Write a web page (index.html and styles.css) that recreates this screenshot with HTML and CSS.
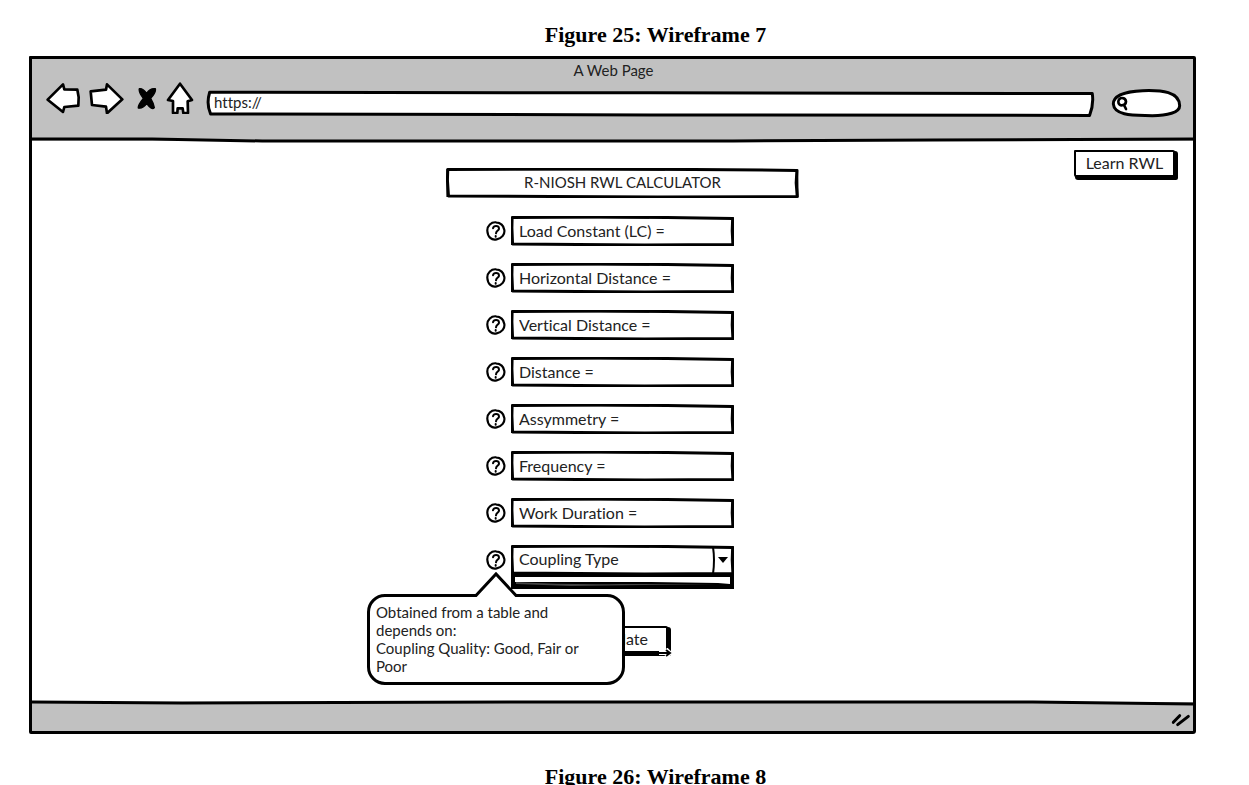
FILE: index.html
```html
<!DOCTYPE html>
<html lang="en">
<head>
<meta charset="utf-8">
<meta name="viewport" content="width=device-width, initial-scale=1">
<title>R-NIOSH RWL Calculator</title>
<link rel="stylesheet" href="styles.css">
</head>
<body>
<svg class="defs" width="0" height="0" aria-hidden="true">
  <symbol id="frame" viewBox="0 0 100 100" preserveAspectRatio="none">
    <path class="ink" d="M0.500 5 L40 3 L70 5 L99.400 8 L99.200 50 L99.500 95 L60 97 L30 95 L0.700 93 L0.400 40Z"/>
    <path class="ink ink-thin" d="M15 3 L62 5 M99.500 4 L99.600 98 M0.400 3 L0.400 97 M40 98 L82 97"/>
  </symbol>
  <symbol id="help" viewBox="0 0 60 60">
    <path d="M31 4C16 2 3 14 4 30C5 48 17 59 32 55C48 52 57 40 55 27C53 13 44 5 29 4" fill="#fff" stroke="#000" stroke-width="6.500"/>
    <path d="M21 22C23 13 38 13 39 22C40 29 31 28 30 37M29 45L29 47" fill="none" stroke="#000" stroke-width="6" stroke-linecap="round"/>
  </symbol>
</svg>

<h2 class="caption">Figure 25: Wireframe 7</h2>

<div class="window">
  <header class="chrome">
    <div class="chrome-title">A Web Page</div>
    <div class="toolbar">
      <button class="tool" type="button" aria-label="Back"><svg width="35" height="32" viewBox="76 94 105 96"><path class="glyph" d="M81 147L127 101L131 116L170 117L174 140L173 165L131 169L127 184Z"/></svg></button>
      <button class="tool tool-forward" type="button" aria-label="Forward"><svg width="35" height="32" viewBox="206 94 105 96"><path class="glyph" d="M211 122L257 117L260 101L306 146L260 188L257 168L215 163Z"/></svg></button>
      <button class="tool tool-stop" type="button" aria-label="Stop"><svg width="20" height="32" viewBox="350 88 60 96"><path stroke="#000" stroke-width="4" stroke-linejoin="round" d="M357 108Q367 106 379 122Q389 106 405 108Q408 118 391 137Q400 152 402 165Q395 174 379 153Q367 169 354 166Q352 158 369 137Q354 118 357 108Z"/></svg></button>
      <button class="tool tool-home" type="button" aria-label="Home"><svg width="28" height="32" viewBox="436 94 84 96"><path class="glyph" d="M478 99L514 148L501 152L502 187L488 187L486 173L471 173L470 187L457 187L457 151L442 148Z"/></svg></button>
      <div class="address">
        <svg class="frame" viewBox="0 0 100 100" preserveAspectRatio="none" aria-hidden="true"><path class="ink" fill="#fff" d="M0.300 5L50 7L99.800 10Q100 50 99.500 94L50 92L0.400 88Q-0.100 50 0.300 5Z"/></svg>
        <input class="address-input" type="text" value="https://" aria-label="Address">
      </div>
      <div class="search">
        <svg class="frame" viewBox="0 0 207 84" preserveAspectRatio="none" aria-hidden="true"><path class="ink" fill="#fff" d="M4 45C4 20 40 7 92 5C150 3 202 8 203 50C203 71 165 80 121 80C78 78 7 84 4 45Z"/></svg>
        <svg class="search-icon" width="14" height="16" viewBox="350 140 42 48" aria-hidden="true"><path d="M380 160C379 146 357 145 357 160C357 175 379 174 380 160M374 170L380 182" fill="none" stroke="#000" stroke-width="8" stroke-linecap="round"/></svg>
        <input class="search-input" type="search" aria-label="Search">
      </div>
    </div>
    <svg class="rule" viewBox="0 0 1160 6" preserveAspectRatio="none" aria-hidden="true"><path class="ink" d="M0 2L120 2L230 4L700 4L900 3L1160 2"/></svg>
  </header>

  <main class="page">
    <form class="calculator">
      <h1 class="box heading"><svg class="frame"><use href="#frame"/></svg>R-NIOSH RWL CALCULATOR</h1>
      <div class="rows">
        <div class="row"><button class="help" type="button" aria-label="Help"><svg width="20" height="20"><use href="#help"/></svg></button><div class="box"><svg class="frame"><use href="#frame"/></svg><input class="field" type="text" value="Load Constant (LC) =" aria-label="Load Constant (LC)"></div></div>
        <div class="row"><button class="help" type="button" aria-label="Help"><svg width="20" height="20"><use href="#help"/></svg></button><div class="box"><svg class="frame"><use href="#frame"/></svg><input class="field" type="text" value="Horizontal Distance =" aria-label="Horizontal Distance"></div></div>
        <div class="row"><button class="help" type="button" aria-label="Help"><svg width="20" height="20"><use href="#help"/></svg></button><div class="box"><svg class="frame"><use href="#frame"/></svg><input class="field" type="text" value="Vertical Distance =" aria-label="Vertical Distance"></div></div>
        <div class="row"><button class="help" type="button" aria-label="Help"><svg width="20" height="20"><use href="#help"/></svg></button><div class="box"><svg class="frame"><use href="#frame"/></svg><input class="field" type="text" value="Distance =" aria-label="Distance"></div></div>
        <div class="row"><button class="help" type="button" aria-label="Help"><svg width="20" height="20"><use href="#help"/></svg></button><div class="box"><svg class="frame"><use href="#frame"/></svg><input class="field" type="text" value="Assymmetry =" aria-label="Assymmetry"></div></div>
        <div class="row"><button class="help" type="button" aria-label="Help"><svg width="20" height="20"><use href="#help"/></svg></button><div class="box"><svg class="frame"><use href="#frame"/></svg><input class="field" type="text" value="Frequency =" aria-label="Frequency"></div></div>
        <div class="row"><button class="help" type="button" aria-label="Help"><svg width="20" height="20"><use href="#help"/></svg></button><div class="box"><svg class="frame"><use href="#frame"/></svg><input class="field" type="text" value="Work Duration =" aria-label="Work Duration"></div></div>
        <div class="row">
          <button class="help" type="button" aria-label="Help" aria-describedby="coupling-tip"><svg width="20" height="20"><use href="#help"/></svg></button>
          <div class="box">
            <svg class="frame"><use href="#frame"/></svg>
            <select class="field" aria-label="Coupling Type"><option>Coupling Type</option></select>
            <svg class="arrow" width="22" height="30" viewBox="0 0 22 30" aria-hidden="true"><path d="M1 2Q3 15 1 29" fill="none" stroke="#000" stroke-width="2"/><path d="M6 12H16L11 18Z"/></svg>
            <svg class="list" viewBox="0 0 223 16" preserveAspectRatio="none" aria-hidden="true"><path d="M0 0H223V16H0Z"/><path d="M4 4H219V11L207 10L140 9L4 9Z" fill="#fff"/><path d="M5 9Q60 12 110 11L206 11L60 13L5 11Z" fill="#444"/></svg>
          </div>
          <div class="tip" id="coupling-tip" role="tooltip">
            <svg class="tip-tail" width="46" height="27" viewBox="0 0 46 27" aria-hidden="true"><path d="M2 27L3 24L23 3L43 24L44 27Z" fill="#fff"/><path d="M0 24.500H3L23 3L43 24.500H46" fill="none" stroke="#000" stroke-width="3"/></svg>
            Obtained from a table and depends on:<br>Coupling Quality: Good, Fair or Poor
          </div>
        </div>
      </div>
      <button class="button calculate" type="button">Calculate<svg class="cursor" width="14" height="10" viewBox="0 0 14 10" aria-hidden="true"><path d="M1 5H11M8 1L12 5L8 9" fill="none" stroke="#fff" stroke-width="4"/><path d="M1 5H11M8 2L12 5L8 8" fill="none" stroke="#000" stroke-width="2"/></svg></button>
    </form>
    <button class="button learn" type="button">Learn RWL</button>
  </main>

  <footer class="status">
    <svg class="rule rule-top" viewBox="0 0 1160 6" preserveAspectRatio="none" aria-hidden="true"><path class="ink" d="M0 2L150 3L500 2L1000 2L1160 4"/></svg>
    <svg width="20" height="16" viewBox="0 0 60 48" aria-hidden="true"><path d="M7 34L26 14M20 41L52 16" fill="none" stroke="#000" stroke-width="9" stroke-linecap="round"/></svg>
  </footer>
</div>

<h2 class="caption caption-next">Figure 26: Wireframe 8</h2>
</body>
</html>
```
FILE: styles.css
```css
* { box-sizing: border-box; }

body {
  margin: 0;
  padding: 22px 53px 0 29px;
  background: #fff;
  color: #222;
  font: 16px/18px Lato, "Open Sans", sans-serif;
  font-variant-ligatures: none;
  overflow-x: hidden;
}

button, input, select {
  margin: 0;
  padding: 0;
  border: 0;
  border-radius: 0;
  background: none;
  color: inherit;
  font: inherit;
}

svg { display: block; }
.defs { position: absolute; }

.ink {
  stroke: #000;
  stroke-width: 3px;
  stroke-linejoin: round;
  vector-effect: non-scaling-stroke;
}
path.ink:not([fill]) { fill: none; }
.ink-thin { stroke-width: 2px; }

.frame {
  position: absolute;
  inset: 0;
  width: 100%;
  height: 100%;
  overflow: visible;
  pointer-events: none;
}

.caption {
  margin: 0;
  padding: 0 0 8px 86px;
  color: #000;
  font: bold 22px/26px "Liberation Serif", serif;
  text-align: center;
}
.caption-next { padding: 30px 0 0 86px; }

.window {
  border: 3px solid #000;
  border-radius: 1px 2px 3px 2px;
}

.chrome {
  position: relative;
  padding: 3px 12px 24px 14px;
  background: #c1c1c1;
}
.chrome-title {
  font-size: 15px;
  line-height: 17px;
  text-align: center;
}
.toolbar {
  display: flex;
  align-items: center;
}
.tool { flex: none; }
.tool-forward { margin-left: 8px; }
.tool-stop { margin-left: 13px; }
.tool-home { margin-left: 9px; }
.glyph {
  fill: #fff;
  stroke: #000;
  stroke-width: 8;
  stroke-linejoin: round;
}

.address {
  position: relative;
  flex: 1;
  height: 26px;
  margin: 11px 18px 0 13px;
}
.address-input {
  position: relative;
  width: 100%;
  height: 22px;
  padding-left: 7px;
  font-size: 15px;
}
.search {
  position: relative;
  display: flex;
  align-items: center;
  width: 69px;
  height: 28px;
  margin-top: 10px;
  padding-left: 4px;
}
.search-icon { position: relative; flex: none; }
.search-input { position: relative; width: 40px; height: 20px; }

.rule {
  position: absolute;
  left: 0;
  bottom: -2px;
  z-index: 1;
  width: 100%;
  height: 6px;
}
.rule-top { top: -2px; bottom: auto; }

.page {
  display: grid;
  grid-template-columns: 1fr auto 1fr;
  align-items: start;
  padding: 9px 16px 46px 36px;
}

.calculator {
  grid-column: 2;
  display: grid;
  width: 353px;
  padding-top: 18px;
}
.box {
  position: relative;
  flex: 1;
  height: 30px;
}
.heading {
  margin: 0 0 18px;
  font-size: 15px;
  font-weight: 400;
  line-height: 28px;
  text-align: center;
}
.rows {
  display: grid;
  gap: 17px;
  padding: 0 65px 0 40px;
}
.row {
  position: relative;
  display: flex;
  align-items: center;
  gap: 5px;
}
.help { flex: none; }
.field {
  position: relative;
  width: 100%;
  height: 28px;
  padding-left: 8px;
  appearance: none;
}
.arrow { position: absolute; top: 0; right: 0; pointer-events: none; }
.list { position: absolute; top: 28px; left: 0; z-index: 1; width: 100%; height: 16px; }

.tip {
  position: absolute;
  top: 49px;
  left: -119px;
  z-index: 2;
  width: 258px;
  padding: 6px 24px 7px 6px;
  border: 3px solid #000;
  border-radius: 18px;
  background: #fff;
  font-size: 15px;
}
.tip-tail { position: absolute; top: -26px; left: 103px; }

.button {
  position: relative;
  height: 27px;
  padding: 0 8px 2px;
  border: 2px solid #000;
  border-radius: 1px 2px 1px 2px;
  background: #fff;
  box-shadow: 2px 2px 0 1px #000;
  white-space: nowrap;
}
.calculate {
  justify-self: start;
  width: 98px;
  margin: 51px 0 3px 124px;
  padding: 0 18px 2px 8px;
  text-align: right;
}
.cursor { position: absolute; right: -6px; bottom: -7px; }
.learn {
  grid-column: 3;
  justify-self: end;
  width: 101px;
  margin-right: 2px;
}

.status {
  position: relative;
  display: flex;
  justify-content: flex-end;
  align-items: center;
  height: 29px;
  padding: 4px 2px 0;
  background: #c1c1c1;
}
```
